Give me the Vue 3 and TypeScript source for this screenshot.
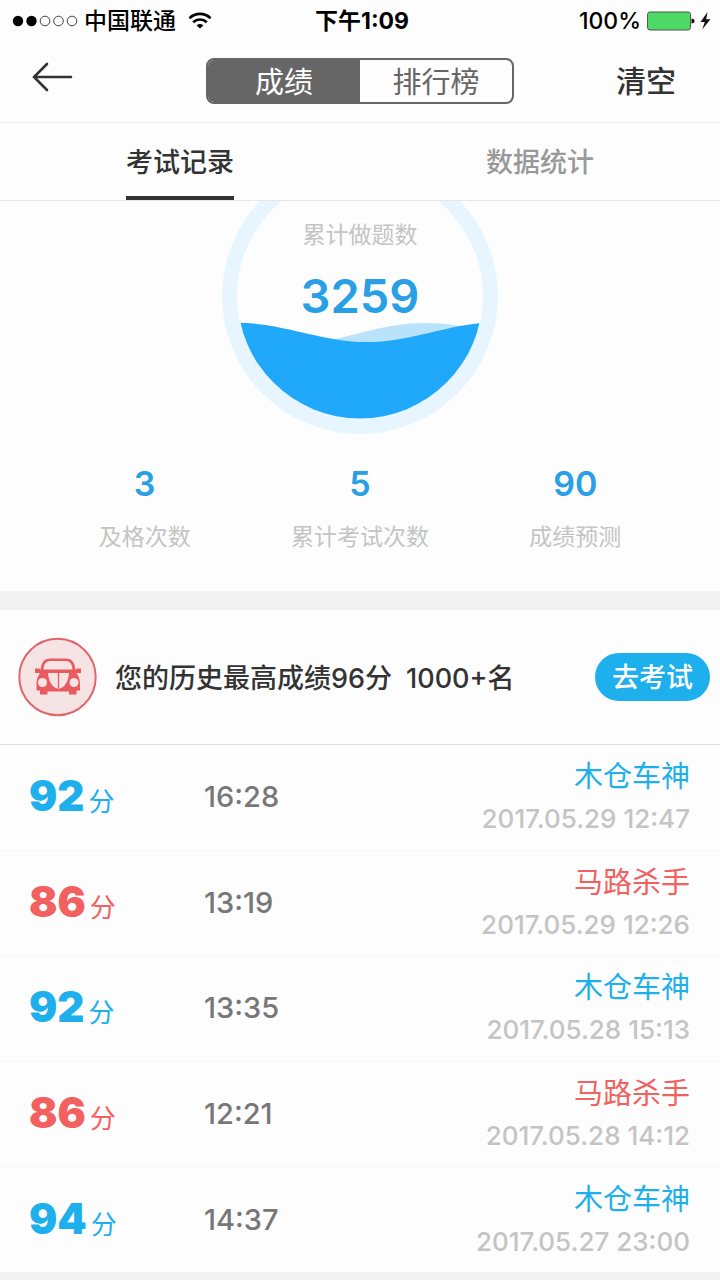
<script setup lang="ts">
import { ref } from 'vue'

interface ExamRecord {
  score: number
  duration: string
  title: string
  date: string
}

const segments = ['成绩', '排行榜']
const tabs = ['考试记录', '数据统计']
const activeSegment = ref(0)
const activeTab = ref(0)

const stats = [
  { value: 3, label: '及格次数' },
  { value: 5, label: '累计考试次数' },
  { value: 90, label: '成绩预测' },
]

const records: ExamRecord[] = [
  { score: 92, duration: '16:28', title: '木仓车神', date: '2017.05.29 12:47' },
  { score: 86, duration: '13:19', title: '马路杀手', date: '2017.05.29 12:26' },
  { score: 92, duration: '13:35', title: '木仓车神', date: '2017.05.28 15:13' },
  { score: 86, duration: '12:21', title: '马路杀手', date: '2017.05.28 14:12' },
  { score: 94, duration: '14:37', title: '木仓车神', date: '2017.05.27 23:00' },
]

const passMark = 90
</script>

<template>
  <div class="page">
    <div class="status">
      <div class="status-left">
        <svg class="signal" width="66" height="12" viewBox="0 0 66 12" aria-hidden="true">
          <circle cx="6" cy="6" r="5.2" />
          <circle cx="19.5" cy="6" r="5.2" />
          <circle class="hollow" cx="33" cy="6" r="4.8" />
          <circle class="hollow" cx="46.5" cy="6" r="4.8" />
          <circle class="hollow" cx="60" cy="6" r="4.8" />
        </svg>
        <span class="carrier">中国联通</span>
        <svg class="wifi" width="24" height="18" viewBox="0 0 24 18" aria-hidden="true">
          <path d="M1.5 6.2 A15 15 0 0 1 22.5 6.2" />
          <path d="M5.2 10.2 A9.8 9.8 0 0 1 18.8 10.2" />
          <path class="dot" d="M12 16.500 L8.600 13.400 A5.600 5.600 0 0 1 15.400 13.400 Z" />
        </svg>
      </div>
      <div class="clock">下午1:09</div>
      <div class="status-right">
        <span>100%</span>
        <svg width="66" height="20" viewBox="0 0 66 20" aria-hidden="true">
          <rect x="1.5" y="1" width="43" height="18" rx="2.5" fill="#4cd964" stroke="#555" stroke-width="1" />
          <path d="M45.5 7.5 Q48.6 8 48.6 10 Q48.6 12 45.5 12.5 Z" fill="#111" />
          <path d="M61.5 1 L54.5 11 H58.8 L56.2 18.5 L64.5 8.2 H60.2 Z" fill="#111" />
        </svg>
      </div>
    </div>

    <header class="nav">
      <button class="back" type="button" aria-label="返回">
        <svg width="42" height="32" viewBox="0 0 42 32" aria-hidden="true">
          <path d="M40 16 H3 M16 3 L3 16 L16 29" />
        </svg>
      </button>
      <div class="segmented">
        <button
          v-for="(name, i) in segments"
          :key="name"
          type="button"
          :class="{ on: activeSegment === i }"
          @click="activeSegment = i"
        >{{ name }}</button>
      </div>
      <button class="clear" type="button">清空</button>
    </header>

    <nav class="tabs">
      <button
        v-for="(name, i) in tabs"
        :key="name"
        type="button"
        :class="{ on: activeTab === i }"
        @click="activeTab = i"
      ><span>{{ name }}</span></button>
    </nav>

    <main class="content">
      <section class="summary">
        <div class="gauge">
          <svg width="278" height="234" viewBox="221 201 278 234" aria-hidden="true">
            <defs>
              <clipPath id="bowl"><circle cx="360" cy="296" r="122.5" /></clipPath>
            </defs>
            <circle cx="360" cy="296" r="130.5" fill="none" stroke="#e6f5fe" stroke-width="15" />
            <g clip-path="url(#bowl)">
              <path d="M320 342 C360 335 385 323 425 323 C450 323 465 327 490 333 V360 H320 Z" fill="#b9e3fa" />
              <path d="M230 323 C282 321 318 342 367 342 C410 342 440 326 490 322 V430 H230 Z" fill="#20a9fa" />
            </g>
          </svg>
          <div class="gauge-text">
            <span class="gauge-label">累计做题数</span>
            <strong class="gauge-value">3259</strong>
          </div>
        </div>
        <dl class="stats">
          <div v-for="s in stats" :key="s.label" class="stat">
            <dt>{{ s.label }}</dt>
            <dd>{{ s.value }}</dd>
          </div>
        </dl>
      </section>

      <section class="best">
        <svg class="badge" width="80" height="80" viewBox="0 0 80 80" aria-hidden="true">
          <circle cx="39.5" cy="40" r="38.2" fill="#f6e4e5" stroke="#e0656c" stroke-width="2" />
          <g fill="#ea5b60">
            <path fill-rule="evenodd" d="M22.500 33 C23.500 26 25 21.500 33 21.500 H47 C55 21.500 56.500 26 57.500 33 L59 37 C61.500 40 62 44 62 48 V53.500 H58.500 V57.500 H51 V54.500 H29.500 V57.500 H22 V53.500 H18.500 V48 C18.500 44 19 40 21.500 37 Z M25.500 32.500 H54.500 C54 27 52.500 24 47 24 H33 C27.500 24 26 27 25.500 32.500 Z" />
            <path d="M17 31.500 H21 L24 34 V36 H17 Z M63 31.500 H59 L56 34 V36 H63 Z" />
          </g>
          <path d="M30 36 H51 C50.500 44 46.500 51.500 40.500 51.500 C34.500 51.500 30.500 44 30 36 Z" fill="#f6e4e5" />
          <path d="M40.500 36 V51" stroke="#ea5b60" stroke-width="1.300" />
          <circle cx="24.500" cy="45.500" r="4.500" fill="#f6e4e5" />
          <circle cx="56" cy="45.500" r="4.500" fill="#f6e4e5" />
        </svg>
        <p><span>您的历史最高成绩96分</span> <span>1000+名</span></p>
        <button class="go" type="button">去考试</button>
      </section>

      <ul class="records">
        <li v-for="r in records" :key="r.date" :class="{ fail: r.score < passMark }">
          <div class="score"><strong>{{ r.score }}</strong><span>分</span></div>
          <span class="duration">{{ r.duration }}</span>
          <div class="detail">
            <span class="title">{{ r.title }}</span>
            <time>{{ r.date }}</time>
          </div>
        </li>
      </ul>
    </main>
  </div>
</template>

<style>
body {
  margin: 0;
  background: #f2f2f2;
}
</style>

<style scoped>
.page {
  box-sizing: border-box;
  min-height: 100vh;
  padding-bottom: 8px;
  display: flex;
  flex-direction: column;
  background: #f2f2f2;
  color: #333;
  font-family: Inter, "Noto Sans CJK SC", sans-serif;
  font-weight: 500;
}

button {
  padding: 0;
  border: 0;
  background: none;
  color: inherit;
  font: inherit;
  cursor: pointer;
}

svg {
  display: block;
  flex: none;
}

.status {
  display: grid;
  grid-template-columns: 1fr auto 1fr;
  align-items: center;
  height: 40px;
  padding: 0 8px 0 12px;
  background: #fdfdfd;
  color: #000;
  font-size: 23px;
  line-height: 42px;
}

.status-left,
.status-right {
  display: flex;
  align-items: center;
}

.status-left {
  gap: 6px;
}

.wifi {
  margin-left: 6px;
  fill: none;
  stroke: #000;
  stroke-width: 2.6;
}

.wifi .dot {
  fill: #000;
  stroke: none;
}

.signal .hollow {
  fill: none;
  stroke: #444;
  stroke-width: 1;
}

.clock {
  font-weight: 700;
}

.status-right {
  justify-content: flex-end;
  gap: 5px;
}

.nav {
  display: grid;
  grid-template-columns: 1fr auto 1fr;
  align-items: center;
  height: 82px;
  border-bottom: 1px solid #f0f0f0;
  background: #fdfdfd;
}

.back {
  justify-self: start;
  margin: 0 0 8px 31px;
}

.back svg {
  fill: none;
  stroke: #333;
  stroke-width: 2.6;
  stroke-linecap: round;
}

.segmented {
  display: flex;
  box-sizing: border-box;
  width: 308px;
  height: 46px;
  border: 2px solid #666;
  border-radius: 8px;
  overflow: hidden;
}

.segmented button {
  flex: 1;
  padding-top: 2px;
  color: #666;
  font-size: 29px;
  font-weight: 400;
  line-height: 42px;
}

.segmented .on {
  background: #666;
  color: #fff;
}

.clear {
  justify-self: end;
  margin-right: 44px;
  font-size: 30px;
  line-height: 44px;
}

.tabs {
  display: grid;
  grid-template-columns: 1fr 1fr;
  height: 77px;
  border-bottom: 1px solid #e6e6e6;
  background: #fdfdfd;
}

.tabs button {
  display: flex;
  justify-content: center;
  color: #999;
  font-size: 27px;
  line-height: 80px;
}

.tabs span {
  box-sizing: border-box;
  height: 77px;
}

.tabs .on {
  color: #333;
}

.tabs .on span {
  border-bottom: 4px solid #333;
}

.content {
  flex: 1;
  display: flex;
  flex-direction: column;
}

.summary {
  padding-bottom: 36px;
  background: #fdfdfd;
}

.gauge {
  display: grid;
  justify-content: center;
}

.gauge > * {
  grid-area: 1 / 1;
}

.gauge-text {
  display: flex;
  flex-direction: column;
  align-items: center;
  padding-top: 17px;
}

.gauge-label {
  color: #c4c4c4;
  font-size: 23px;
  font-weight: 400;
  line-height: 34px;
}

.gauge-value {
  margin-top: 14px;
  color: #299fe6;
  font-size: 47px;
  font-weight: 600;
  line-height: 60px;
}

.stats {
  display: grid;
  grid-template-columns: repeat(3, 1fr);
  margin: 26px 0 0;
  padding: 0 37px;
}

.stat {
  display: flex;
  flex-direction: column-reverse;
  align-items: center;
  gap: 13px;
}

.stat dt {
  color: #c4c4c4;
  font-size: 23px;
  font-weight: 400;
  line-height: 35px;
}

.stat dd {
  margin: 0;
  color: #299fe6;
  font-size: 34px;
  font-weight: 600;
  line-height: 46px;
}

.best {
  display: flex;
  align-items: center;
  height: 134px;
  margin-top: 19px;
  padding: 0 10px 0 18px;
  border-bottom: 1px solid #e0e0e0;
  background: #fdfdfd;
}

.best p {
  flex: 1;
  display: flex;
  gap: 14px;
  margin: 0 0 0 17px;
  padding-top: 3px;
  font-size: 27px;
  line-height: 40px;
}

.go {
  padding: 2px 17px 0;
  border-radius: 24px;
  background: #1eb0ec;
  color: #fff;
  font-size: 27px;
  line-height: 46px;
}

.records {
  flex: 1;
  display: flex;
  flex-direction: column;
  margin: 0;
  padding: 0;
  list-style: none;
  background: #fdfdfd;
}

.records li {
  flex: 1;
  display: grid;
  grid-template-columns: 175px 1fr auto;
  align-items: center;
  padding: 0 30px 0 29px;
  color: #1eb0ec;
}

.records li + li {
  border-top: 1px solid #f6f6f6;
}

.records .fail {
  color: #f2605f;
}

.score {
  display: flex;
  align-items: baseline;
  gap: 4px;
  padding-top: 4px;
  line-height: 56px;
}

.score strong {
  font-size: 42px;
  font-weight: 900;
}

.score span {
  font-size: 26px;
  font-weight: 400;
}

.duration {
  color: #777;
  font-size: 29px;
  line-height: 40px;
}

.detail {
  display: flex;
  flex-direction: column;
  align-items: flex-end;
  gap: 2px;
}

.title {
  font-size: 29px;
  font-weight: 400;
  line-height: 42px;
}

.detail time {
  color: #c4c4c4;
  font-size: 26px;
  line-height: 38px;
}
</style>
